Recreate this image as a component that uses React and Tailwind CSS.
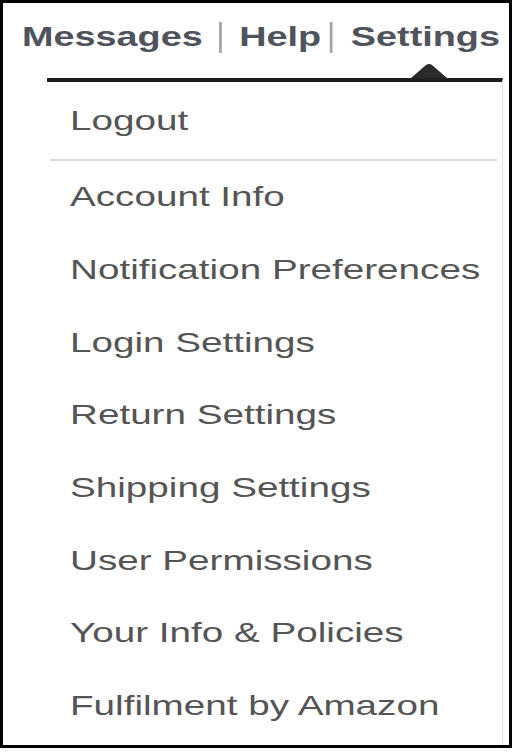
const items = [
  'Account Info',
  'Notification Preferences',
  'Login Settings',
  'Return Settings',
  'Shipping Settings',
  'User Permissions',
  'Your Info & Policies',
  'Fulfilment by Amazon',
];

const MenuItem = ({ label }) => (
  <div className="h-[72.7px] flex items-center pl-[23px]">
    <span className="inline-block origin-left scale-x-[1.38] text-[28px] leading-[32px] text-[#555555]">
      {label}
    </span>
  </div>
);

export default function App() {
  return (
    <div className="w-[512px] h-[748px] border-[3px] border-black bg-white overflow-hidden font-['Liberation_Sans',Arial,sans-serif]">
      {/* Top nav */}
      <div className="pt-[18px] pl-[19px]">
        <div className="flex items-center origin-left scale-x-[1.35] text-[28px] leading-[32px] font-bold text-[#4f535b]">
          <span>Messages</span>
          <span className="ml-[12px] mr-[13px] w-[2px] h-[31px] bg-[#a3a3a3]" />
          <span>Help</span>
          <span className="ml-[6px] mr-[14px] w-[2px] h-[31px] bg-[#a3a3a3]" />
          <span>Settings</span>
        </div>
      </div>

      {/* Caret */}
      <div className="h-[25px] flex items-end justify-end pr-[62px]">
        <svg width="36" height="15" viewBox="0 0 36 15" className="block">
          <path d="M0 15 L15 2 Q18 0 21 2 L36 15 Z" fill="#2a2a2a" />
        </svg>
      </div>

      {/* Dropdown panel */}
      <div className="ml-[44px] mr-[6px] border-t-4 border-t-[#1f1f1f] border-r border-r-[#e2e2e2] h-[700px]">
        <div className="h-[77px] flex items-center pl-[23px]">
          <span className="inline-block origin-left scale-x-[1.38] text-[28px] leading-[32px] text-[#555555]">
            Logout
          </span>
        </div>
        <div className="ml-[3px] mr-[5px] h-[2px] bg-[#d9d9d9]" />
        {items.map((label) => (
          <MenuItem key={label} label={label} />
        ))}
      </div>
    </div>
  );
}
